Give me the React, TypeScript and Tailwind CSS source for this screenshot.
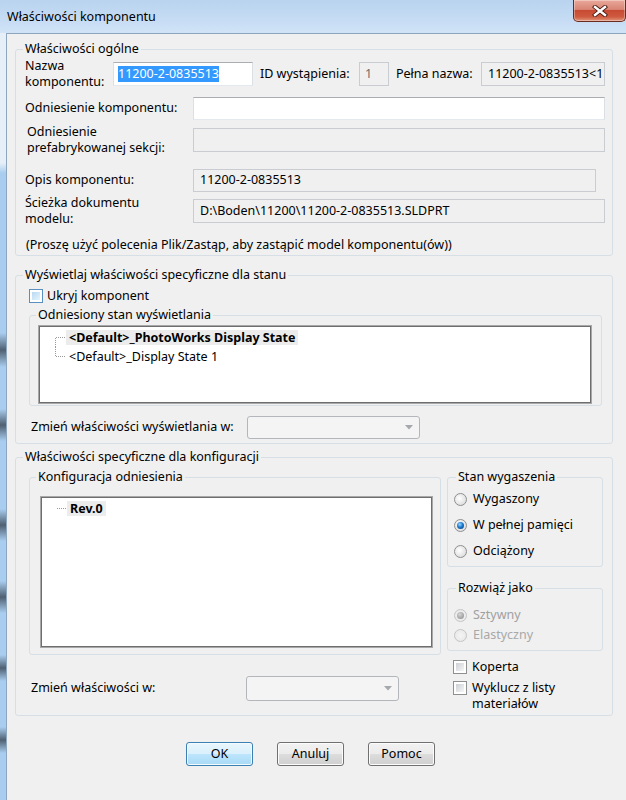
import React from "react";

const tb = "border border-t-[#abadb3] border-l-[#dbdfe6] border-r-[#dbdfe6] border-b-[#e3e9ef]";
const dis = "border border-[#c9cdd2] bg-[#f0f0f0]";

function Legend({ children, className = "" }: { children: React.ReactNode; className?: string }) {
  return <legend className={"px-[2px] leading-[16px] " + className}>{children}</legend>;
}

function Radio({ checked = false, disabled = false }: { checked?: boolean; disabled?: boolean }) {
  return (
    <span
      className={
        "w-[13px] h-[13px] shrink-0 rounded-full border flex items-center justify-center " +
        (disabled
          ? "border-[#c4c4c4] bg-[radial-gradient(circle_at_50%_50%,#f4f4f4_0%,#e6e6e6_100%)]"
          : "border-[#8e8f8f] bg-[radial-gradient(circle_at_40%_40%,#ffffff_0%,#dcdcdc_80%)]")
      }
    >
      {checked && (
        <span
          className={
            "w-[7px] h-[7px] rounded-full " +
            (disabled
              ? "bg-[radial-gradient(circle_at_40%_35%,#d6d6d6_0%,#9a9a9a_75%)]"
              : "bg-[radial-gradient(circle_at_40%_35%,#9ad9ff_0%,#1c7ad0_45%,#0a3f7e_90%)]")
          }
        />
      )}
    </span>
  );
}

function Check({ blue = false }: { blue?: boolean }) {
  return (
    <span
      className={
        "w-[14px] h-[14px] shrink-0 border bg-white p-[2px] flex " +
        (blue ? "border-[#5a8fc2]" : "border-[#8e8f8f]")
      }
    >
      <span
        className={
          "flex-1 " +
          (blue
            ? "bg-[linear-gradient(135deg,#b7d9f2_0%,#e6f4fc_100%)]"
            : "bg-[linear-gradient(135deg,#cbcfd5_0%,#f6f6f6_100%)]")
        }
      />
    </span>
  );
}

function Combo({ w, h }: { w: string; h: string }) {
  return (
    <div className={`${w} ${h} shrink-0 rounded-[3px] border border-[#b3b7bb] bg-[#f4f4f4] flex items-center justify-end pr-[6px]`}>
      <svg width="8" height="5" viewBox="0 0 8 5">
        <path d="M0 0 H8 L4 4.5 Z" fill="#a5a9ad" />
      </svg>
    </div>
  );
}

function TreeLine({ kind }: { kind: "first" | "last" | "only" }) {
  return (
    <svg width="11" height="19" viewBox="0 0 11 19" className="shrink-0">
      <line x1="1" y1="9.5" x2="11" y2="9.5" stroke="#9a9a9a" strokeDasharray="1 1" />
      {kind === "first" && <line x1="0.5" y1="10" x2="0.5" y2="19" stroke="#9a9a9a" strokeDasharray="1 1" />}
      {kind === "last" && <line x1="0.5" y1="0" x2="0.5" y2="10" stroke="#9a9a9a" strokeDasharray="1 1" />}
    </svg>
  );
}

function ListBox({ h, children }: { h: string; children?: React.ReactNode }) {
  return (
    <div className={`${h} border border-[#a8a8a8] bg-white shadow-[inset_0_0_0_1px_#6e6e6e] p-[1px]`}>
      <div className="pt-[1px]">{children}</div>
    </div>
  );
}

export default function App() {
  return (
    <div className="w-[626px] h-[800px] overflow-hidden flex flex-col font-['Noto_Sans',sans-serif] text-[12.5px] text-black bg-[#c6dcf3]">
      {/* title bar */}
      <div className="h-[33px] shrink-0 flex items-start bg-[linear-gradient(to_bottom,#b9d3ef_0%,#c6dcf4_60%,#d1e4f7_100%)]">
        <div className="pl-[7px] pt-[8px] text-[12.5px] leading-[18px] text-black">Właściwości komponentu</div>
        <div className="ml-auto w-[53px] h-[22px] rounded-b-[5px] border border-t-0 border-[#6a2a1e] bg-[linear-gradient(to_bottom,#e9a99b_0%,#d88473_45%,#c74a32_50%,#cf5a40_80%,#e0967a_100%)] flex items-center justify-center shadow-[inset_0_0_0_1px_rgba(255,255,255,0.35)]">
          <svg width="16" height="12" viewBox="0 0 16 12">
            <path d="M3 2 L13 10 M13 2 L3 10" stroke="#4a1a10" strokeWidth="4.2" strokeLinecap="square" />
            <path d="M3 2 L13 10 M13 2 L3 10" stroke="#ffffff" strokeWidth="2.4" strokeLinecap="square" />
          </svg>
        </div>
      </div>

      <div className="flex flex-1 min-h-0">
        {/* left frame */}
        <div className="w-[6px] shrink-0 bg-[linear-gradient(to_bottom,#e6eff8_0px,#e6eff8_130px,#a9cdef_140px,#a9cdef_300px,#4f6072_317px,#a9cdef_334px,#a9cdef_376px,#4f6072_392px,#a9cdef_408px,#a9cdef_476px,#4f6072_492px,#a9cdef_508px,#a9cdef_548px,#4f6072_564px,#a9cdef_580px,#a9cdef_622px,#4f6072_635px,#a9cdef_648px,#a9cdef_694px,#4f6072_707px,#a9cdef_720px,#a9cdef_767px)]" />

        {/* client area */}
        <div className="flex-1 bg-[#f0f0f0] border-l border-t border-[#8ea5be] pl-[8px]">
          {/* Group 1 */}
          <fieldset className="mt-[7px] w-[598px] min-w-0 border border-[#d5dfe5] rounded-[3px] pl-[9px] pr-[6px] pb-[2px]">
            <Legend className="-ml-[2px]">Właściwości ogólne</Legend>

            <div className="mt-[2px] h-[30px] flex items-center">
              <div className="w-[88px] shrink-0 leading-[16px]">
                Nazwa
                <br />
                komponentu:
              </div>
              <div className={`w-[140px] h-[24px] shrink-0 bg-white ${tb} border-[#8fb3d9] flex items-center pl-[4px]`}>
                <span className="bg-[#3399ff] text-white leading-[16px]">11200-2-0835513</span>
              </div>
              <div className="w-[106px] shrink-0 pl-[7px] whitespace-nowrap">ID wystąpienia:</div>
              <div className={`w-[30px] h-[24px] shrink-0 ${dis} text-[#6d6d6d] flex items-center pl-[5px]`}>1</div>
              <div className="w-[92px] shrink-0 pl-[7px] whitespace-nowrap">Pełna nazwa:</div>
              <div className={`w-[124px] h-[24px] shrink-0 ${dis} flex items-center pl-[6px] overflow-hidden whitespace-nowrap`}>
                11200-2-0835513&lt;1
              </div>
            </div>

            <div className="mt-[8px] h-[23px] flex items-center">
              <div className="w-[168px] shrink-0 whitespace-nowrap">Odniesienie komponentu:</div>
              <div className={`w-[412px] h-[23px] shrink-0 bg-white ${tb}`} />
            </div>

            <div className="mt-[4px] h-[32px] flex items-center">
              <div className="w-[168px] shrink-0 pl-[2px] leading-[16px]">
                Odniesienie
                <br />
                prefabrykowanej sekcji:
              </div>
              <div className={`w-[412px] h-[24px] shrink-0 ${dis}`} />
            </div>

            <div className="mt-[13px] h-[23px] flex items-center">
              <div className="w-[168px] shrink-0">Opis komponentu:</div>
              <div className={`w-[403px] h-[23px] shrink-0 ${dis} flex items-center pl-[6px]`}>11200-2-0835513</div>
            </div>

            <div className="mt-[3px] h-[32px] flex items-center">
              <div className="w-[168px] shrink-0 leading-[16px]">
                Ścieżka dokumentu
                <br />
                modelu:
              </div>
              <div className={`w-[412px] h-[24px] shrink-0 ${dis} flex items-center pl-[6px]`}>
                D:\Boden\11200\11200-2-0835513.SLDPRT
              </div>
            </div>

            <div className="mt-[10px] leading-[16px] pl-[1px] whitespace-nowrap">
              (Proszę użyć polecenia Plik/Zastąp, aby zastąpić model komponentu(ów))
            </div>
          </fieldset>

          {/* Group 2 */}
          <fieldset className="mt-[11px] w-[598px] min-w-0 border border-[#d5dfe5] rounded-[3px] pl-[9px] pr-[6px] pb-[4px]">
            <Legend className="-ml-[2px]">Wyświetlaj właściwości specyficzne dla stanu</Legend>

            <div className="mt-[5px] h-[16px] flex items-center ml-[4px]">
              <Check blue />
              <span className="ml-[4px] leading-[16px]">Ukryj komponent</span>
            </div>

            <fieldset className="mt-[3px] ml-[4px] mr-[4px] min-w-0 border border-[#d5dfe5] rounded-[3px] pl-[8px] pr-[9px] pb-[1px]">
              <Legend className="-ml-[2px]">Odniesiony stan wyświetlania</Legend>
              <div className="mt-[2px]">
                <ListBox h="h-[79px]">
                  <div className="h-[19px] flex items-center pl-[15px]">
                    <TreeLine kind="first" />
                    <span className="px-[3px] leading-[15px] bg-[#ececec] font-bold whitespace-nowrap">
                      &lt;Default&gt;_PhotoWorks Display State
                    </span>
                  </div>
                  <div className="h-[19px] flex items-center pl-[15px]">
                    <TreeLine kind="last" />
                    <span className="px-[3px] leading-[15px] whitespace-nowrap">&lt;Default&gt;_Display State 1</span>
                  </div>
                </ListBox>
              </div>
            </fieldset>

            <div className="mt-[10px] h-[23px] flex items-center">
              <div className="w-[222px] shrink-0 pl-[6px] whitespace-nowrap">Zmień właściwości wyświetlania w:</div>
              <Combo w="w-[173px]" h="h-[23px]" />
            </div>
          </fieldset>

          {/* Group 3 */}
          <fieldset className="mt-[5px] w-[598px] min-w-0 border border-[#d5dfe5] rounded-[3px] pl-[9px] pr-[6px] pb-[3px]">
            <Legend className="-ml-[2px]">Właściwości specyficzne dla konfiguracji</Legend>

            <div className="flex items-start">
              <div className="ml-[4px] w-[412px] shrink-0">
                <fieldset className="mt-[4px] min-w-0 border border-[#d5dfe5] rounded-[3px] pl-[10px] pr-[7px] pb-[6px]">
                  <Legend className="-ml-[4px]">Konfiguracja odniesienia</Legend>
                  <div className="mt-[11px]">
                    <ListBox h="h-[152px]">
                      <div className="h-[19px] flex items-center pl-[14px]">
                        <TreeLine kind="only" />
                        <span className="px-[3px] leading-[15px] bg-[#ececec] font-bold">Rev.0</span>
                      </div>
                    </ListBox>
                  </div>
                </fieldset>
                <div className="mt-[21px] h-[25px] flex items-center">
                  <div className="w-[217px] shrink-0 pl-[2px] whitespace-nowrap">Zmień właściwości w:</div>
                  <Combo w="w-[153px]" h="h-[25px]" />
                </div>
              </div>

              <div className="ml-[6px] w-[156px] shrink-0">
                <fieldset className="mt-[4px] min-w-0 border border-[#d5dfe5] rounded-[3px] pl-[6px] pr-[4px] pb-[2px]">
                  <Legend className="ml-[2px]">Stan wygaszenia</Legend>
                  <div className="mt-[1px]">
                    <div className="h-[26px] flex items-center gap-[6px]">
                      <Radio />
                      <span>Wygaszony</span>
                    </div>
                    <div className="h-[26px] flex items-center gap-[6px]">
                      <Radio checked />
                      <span>W pełnej pamięci</span>
                    </div>
                    <div className="h-[26px] flex items-center gap-[6px]">
                      <Radio />
                      <span>Odciążony</span>
                    </div>
                  </div>
                </fieldset>

                <fieldset className="mt-[13px] min-w-0 border border-[#d5dfe5] rounded-[3px] pl-[6px] pr-[4px] pb-[5px]">
                  <Legend className="ml-[2px]">Rozwiąż jako</Legend>
                  <div className="mt-[9px]">
                    <div className="h-[20px] flex items-center gap-[6px] text-[#a0a0a0]">
                      <Radio checked disabled />
                      <span>Sztywny</span>
                    </div>
                    <div className="h-[20px] flex items-center gap-[6px] text-[#a8a8a8]">
                      <Radio disabled />
                      <span>Elastyczny</span>
                    </div>
                  </div>
                </fieldset>

                <div className="mt-[8px] ml-[6px]">
                  <div className="h-[16px] flex items-center">
                    <Check />
                    <span className="ml-[5px] leading-[16px]">Koperta</span>
                  </div>
                  <div className="mt-[5px] flex items-start">
                    <span className="mt-[1px]">
                      <Check />
                    </span>
                    <span className="ml-[5px] leading-[16px]">
                      Wyklucz z listy
                      <br />
                      materiałów
                    </span>
                  </div>
                </div>
              </div>
            </div>
          </fieldset>

          {/* Buttons */}
          <div className="mt-[26px] pl-[171px] flex gap-[24px]">
            <button className="w-[67px] h-[24px] rounded-[3px] border border-[#3c7fb1] bg-[linear-gradient(to_bottom,#eaf6fd_0%,#d9f0fc_50%,#bee6fd_50%,#a7d9f5_100%)] shadow-[inset_0_0_0_1px_#f4fbfe] leading-[16px]">
              OK
            </button>
            <button className="w-[67px] h-[24px] rounded-[3px] border border-[#707070] bg-[linear-gradient(to_bottom,#f2f2f2_0%,#ebebeb_50%,#dddddd_50%,#cfcfcf_100%)] shadow-[inset_0_0_0_1px_#fcfcfc] leading-[16px]">
              Anuluj
            </button>
            <button className="w-[67px] h-[24px] rounded-[3px] border border-[#707070] bg-[linear-gradient(to_bottom,#f2f2f2_0%,#ebebeb_50%,#dddddd_50%,#cfcfcf_100%)] shadow-[inset_0_0_0_1px_#fcfcfc] leading-[16px]">
              Pomoc
            </button>
          </div>
        </div>
      </div>
    </div>
  );
}
